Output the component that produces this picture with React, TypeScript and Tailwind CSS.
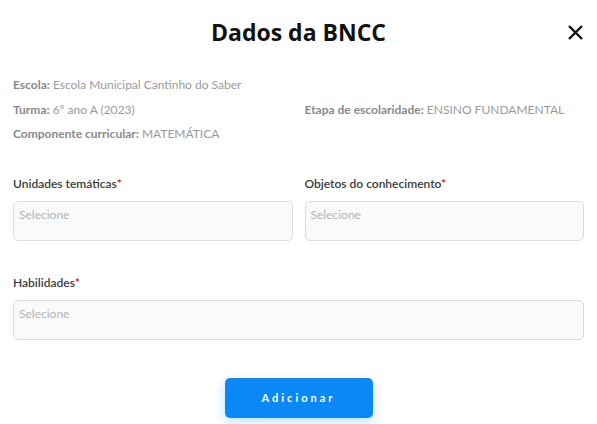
import React from 'react';

function Info({ label, value }: { label: string; value: string }) {
  return (
    <p className="text-[12px] leading-[16px] text-[#9a9a9a]">
      <span className="font-bold text-[#8a8a8a]">{label}:</span> {value}
    </p>
  );
}

function Field({ label, className = '' }: { label: string; className?: string }) {
  return (
    <div className={`flex flex-col gap-[9px] ${className}`}>
      <label className="text-[12px] leading-[16px] font-semibold text-[#3a3a3a]">
        {label}
        <span className="text-[#e60000]">*</span>
      </label>
      <div className="h-[40px] rounded-[5px] border border-[#dcdcdc] bg-[#fafafa] px-[5px] pt-[5px] text-[12px] leading-[16px] text-[#b3b3b3]">
        Selecione
      </div>
    </div>
  );
}

export default function App() {
  return (
    <div className="w-[597px] h-[424px] bg-white font-['Lato',sans-serif] relative">
      <header className="flex items-center justify-center pt-[17px] h-[47px]">
        <h1 className="text-[23px] font-bold text-[#111] font-['Open_Sans',sans-serif]">Dados da BNCC</h1>
        <button className="absolute right-[14px] top-[24px] w-[16px] h-[16px] flex items-center justify-center">
          <svg width="15" height="15" viewBox="0 0 15 15" fill="none" stroke="#111" strokeWidth="2.4" strokeLinecap="butt">
            <path d="M1 1L14 14M14 1L1 14" />
          </svg>
        </button>
      </header>

      <section className="px-[13px] pt-[30px] grid grid-cols-2 gap-x-[12px] gap-y-[8.5px]">
        <div className="col-span-2"><Info label="Escola" value="Escola Municipal Cantinho do Saber" /></div>
        <Info label="Turma" value="6º ano A (2023)" />
        <Info label="Etapa de escolaridade" value="ENSINO FUNDAMENTAL" />
        <div className="col-span-2"><Info label="Componente curricular" value="MATEMÁTICA" /></div>
      </section>

      <section className="px-[13px] pt-[34px] grid grid-cols-2 gap-x-[12px] gap-y-[34px]">
        <Field label="Unidades temáticas" />
        <Field label="Objetos do conhecimento" />
        <Field label="Habilidades" className="col-span-2" />
      </section>

      <div className="flex justify-center pt-[38px]">
        <button className="w-[148px] h-[40px] rounded-[5px] bg-[#0a88f6] text-white text-[11px] font-bold tracking-[3px] shadow-[0_4px_12px_rgba(10,136,246,0.25)]">
          Adicionar
        </button>
      </div>
    </div>
  );
}
